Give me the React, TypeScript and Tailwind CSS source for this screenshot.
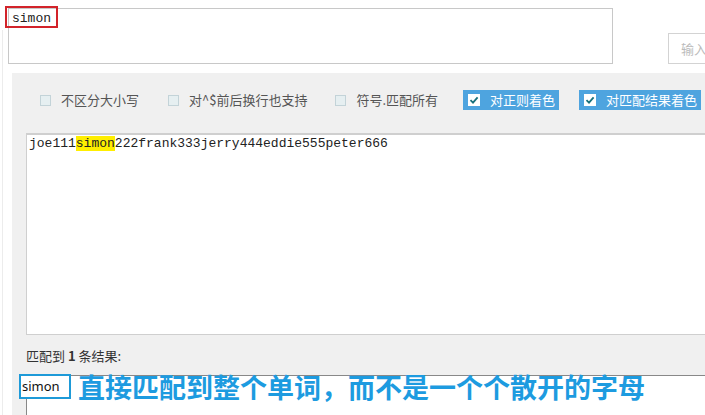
import React from 'react';

const cjk = "font-['Noto_Sans_CJK_SC','Noto_Sans',sans-serif]";
const mono = "font-['Liberation_Mono','DejaVu_Sans_Mono',monospace]";

const Plain = ({ label }: { label: string }) => (
  <div className="flex items-center gap-[10px] shrink-0 whitespace-nowrap">
    <span className="w-[11px] h-[11px] shrink-0 border border-[#c3d3d8] bg-[#e6eff1]" />
    <span className="text-[13px] text-[#555]">{label}</span>
  </div>
);

const Checked = ({ label }: { label: string }) => (
  <div className="flex items-center gap-[10px] h-[20px] pl-[5px] pr-[4px] bg-[#4ea4df] shrink-0 whitespace-nowrap">
    <span className="w-[12px] h-[12px] shrink-0 bg-white flex items-center justify-center">
      <svg width="10" height="10" viewBox="0 0 10 10">
        <path d="M1.5 5.2 L4 7.6 L8.6 2.4" stroke="#17707c" strokeWidth="1.8" fill="none" />
      </svg>
    </span>
    <span className="text-[13px] text-white">{label}</span>
  </div>
);

const App = () => {
  return (
    <div className={`relative w-[705px] h-[415px] overflow-hidden bg-white flex flex-col ${cjk}`}>
      <div className="absolute left-[2px] top-[30px] bottom-0 w-px bg-[#ececec]" />

      <div className="flex items-end pt-[8px] pl-[8px]">
        <div className="w-[605px] h-[56px] shrink-0 border border-[#c8c8c8] bg-white" />
        <div className="ml-[55px] w-[60px] h-[31px] shrink-0 border border-[#d3d3d3] bg-white text-[13px] text-[#bbb] pl-[12px] pt-[5px]">
          输入
        </div>
      </div>

      {/* highlighted regex input */}
      <div className={`absolute left-[5px] top-[6px] w-[53px] h-[22px] border-2 border-[#d2232a] pl-[5px] pt-[1px] text-[13px] text-[#222] ${mono}`}>
        simon
      </div>

      <div className="flex-1 mt-[9px] ml-[12px] bg-[#f0f0f0] flex flex-col">
        <div className="flex items-center h-[20px] mt-[17px] pl-[28px]">
          <Plain label="不区分大小写" />
          <div className="w-[29px] shrink-0" />
          <Plain label="对^$前后换行也支持" />
          <div className="w-[28px] shrink-0" />
          <Plain label="符号.匹配所有" />
          <div className="w-[25px] shrink-0" />
          <Checked label="对正则着色" />
          <div className="w-[20px] shrink-0" />
          <Checked label="对匹配结果着色" />
        </div>

        <div className={`mt-[23px] ml-[14px] h-[202px] bg-white border-t-2 border-b border-l border-[#cfcfcf] pl-[2px] text-[13px] leading-[18px] text-[#222] ${mono}`}>
          joe111<span className="bg-[#ffee00]">simon</span>222frank333jerry444eddie555peter666
        </div>

        <div className="ml-[14px] mt-[11px] text-[13px] text-[#333]">
          匹配到 <span className="font-bold">1</span> 条结果:
        </div>

        <div className="relative flex-1 mt-[9px] ml-[14px] bg-white border-t border-l border-[#888]">
          <div className="absolute left-[-8px] top-[-2px] flex items-center gap-[7px]">
            <div className="h-[25px] w-[52px] border-2 border-[#1e9ad8] bg-white text-[13px] text-[#111] flex items-center pl-[1px] font-['Noto_Sans',sans-serif]">
              simon
            </div>
            <span className="text-[27px] leading-[26px] font-bold text-[#1d9be0] whitespace-nowrap">
              直接匹配到整个单词，而不是一个个散开的字母
            </span>
          </div>
        </div>
      </div>
    </div>
  );
};

export default App;
